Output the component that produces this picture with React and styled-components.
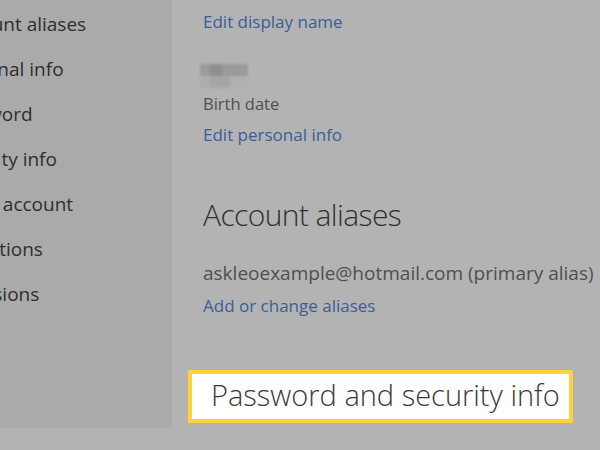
import React from "react";
import styled, { createGlobalStyle } from "styled-components";

const Global = createGlobalStyle`
  html, body { margin: 0; padding: 0; }
  body {
    width: 600px;
    height: 450px;
    overflow: hidden;
    background: #b3b3b3;
    font-family: "Open Sans", "Noto Sans", sans-serif;
  }
`;

const Page = styled.div`
  width: 600px;
  height: 450px;
  overflow: hidden;
  display: flex;
  align-items: flex-start;
  background: #b3b3b3;
`;

const Sidebar = styled.nav`
  width: 172px;
  height: 428px;
  flex: none;
  overflow: hidden;
  background: #aaaaaa;
`;

// the menu is scrolled partly out of view on the left
const NavList = styled.ul`
  list-style: none;
  margin: 0 0 0 -50px;
  padding: 11px 0 0;
  display: flex;
  flex-direction: column;
  gap: 19px;
`;

const NavItem = styled.li`
  margin-left: ${(p) => p.$shift || 0}px;
  font-size: 19px;
  line-height: 26px;
  color: #2e2e2e;
  white-space: nowrap;
`;

const Main = styled.main`
  flex: 1;
  display: flex;
  flex-direction: column;
  align-items: flex-start;
  padding-left: 31px;
  min-width: 0;
`;

const Link = styled.a`
  display: block;
  margin-top: ${(p) => p.$top || 0}px;
  font-size: 17px;
  line-height: 24px;
  color: #3b5d98;
  white-space: nowrap;
  text-decoration: none;
`;

const Muted = styled.div`
  margin-top: ${(p) => p.$top || 0}px;
  font-size: ${(p) => p.$size || 16.5}px;
  line-height: 24px;
  color: #4f4f4f;
  white-space: nowrap;
`;

const Blurred = styled.div`
  margin-top: 30px;
  margin-left: -3px;
  width: 48px;
  height: 24px;
  display: grid;
  grid-template-rows: 12px 12px;
  filter: blur(1px);
`;

const BlurRow = styled.div`
  display: flex;
`;

const BlurCell = styled.span`
  width: ${(p) => p.$w}px;
  background: ${(p) => p.$c};
`;

const Heading = styled.h2`
  margin: ${(p) => p.$top || 0}px 0 0;
  font-size: 30px;
  font-weight: 300;
  letter-spacing: -0.6px;
  line-height: 36px;
  color: #303030;
  white-space: nowrap;
`;

const Highlight = styled.div`
  margin-top: 52px;
  margin-left: -15px;
  width: 385px;
  height: 53px;
  box-sizing: border-box;
  border: 4px solid #fdd23c;
  background: #ffffff;
  display: flex;
  align-items: center;
  padding: 0 0 5px 19px;
`;

const HighlightText = styled.span`
  font-size: 29px;
  font-weight: 300;
  color: #3a3a3a;
  white-space: nowrap;
`;

const navItems = [
  { label: "Account aliases", shift: 0 },
  { label: "Personal info", shift: -3 },
  { label: "Password", shift: -3 },
  { label: "Security info", shift: -3 },
  { label: "Close account", shift: 0 },
  { label: "Notifications", shift: -19 },
  { label: "Permissions", shift: -18 },
];

export default function App() {
  return (
    <>
      <Global />
      <Page>
        <Sidebar>
          <NavList>
            {navItems.map((item) => (
              <NavItem key={item.label} $shift={item.shift}>
                {item.label}
              </NavItem>
            ))}
          </NavList>
        </Sidebar>
        <Main>
          <Link $top={10}>Edit display name</Link>
          <Blurred>
            <BlurRow>
              <BlurCell $w={10} $c="#9c9c9c" />
              <BlurCell $w={12} $c="#8f8f8f" />
              <BlurCell $w={26} $c="#9a9a9a" />
            </BlurRow>
            <BlurRow>
              <BlurCell $w={10} $c="#adadad" />
              <BlurCell $w={20} $c="#a5a5a5" />
              <BlurCell $w={18} $c="#b0b0b0" />
            </BlurRow>
          </Blurred>
          <Muted $top={4}>Birth date</Muted>
          <Link $top={7}>Edit personal info</Link>
          <Heading $top={50}>Account aliases</Heading>
          <Muted $top={28} $size={19}>askleoexample@hotmail.com (primary alias)</Muted>
          <Link $top={9}>Add or change aliases</Link>
          <Highlight>
            <HighlightText>Password and security info</HighlightText>
          </Highlight>
        </Main>
      </Page>
    </>
  );
}
